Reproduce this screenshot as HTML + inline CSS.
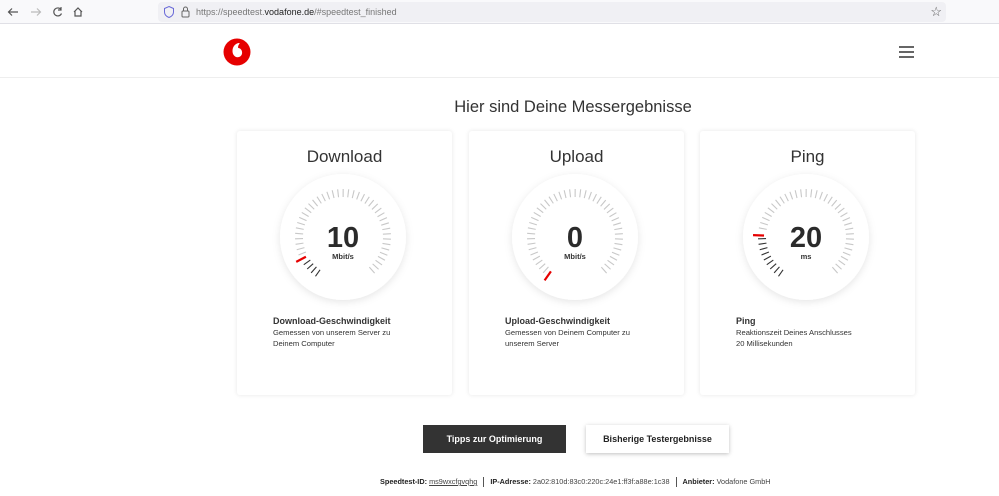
<!DOCTYPE html>
<html><head><meta charset="utf-8"><style>
*{box-sizing:border-box;margin:0;padding:0}
body{width:999px;height:496px;overflow:hidden;background:#fff;font-family:"Liberation Sans",sans-serif;color:#333;position:relative}
.bar{position:absolute;left:0;top:0;width:999px;height:24px;background:#f9f9fb;border-bottom:1px solid #e0e0e6}
.url{position:absolute;left:158px;top:2px;width:788px;height:20px;background:#f0f0f4;border-radius:4px;font-size:9px;color:#777;line-height:20px;padding-left:38px}
.url b{color:#222;font-weight:normal}
.hdr{position:absolute;top:24px;left:0;width:999px;height:54px;border-bottom:1px solid #eee}
h1{position:absolute;top:98px;left:0;width:1146px;text-align:center;font-weight:normal;font-size:16.5px;color:#333}
.card{position:absolute;top:131px;width:215px;height:264px;background:#fff;box-shadow:0 0 5px rgba(0,0,0,.1);border-radius:3px}
.card h2{position:absolute;top:16px;width:100%;text-align:center;font-weight:normal;font-size:17px;color:#333}
.card svg{position:absolute;left:0;top:0}
.d{position:absolute;left:36px;top:184px;font-size:7.6px;line-height:11px;color:#333}
.d b{font-size:9px;display:block;line-height:12px}
.btn{position:absolute;top:425px;height:28px;font-size:9px;font-weight:bold;text-align:center;line-height:28px}
.foot{position:absolute;top:477px;left:380px;font-size:7.3px;color:#444;white-space:nowrap}
.foot b{color:#222}
.sep{display:inline-block;width:1px;height:10px;background:#555;vertical-align:middle;margin:0 6px}
</style></head><body>
<div class="bar">
<svg width="150" height="24" style="position:absolute;left:0;top:0" fill="none" stroke="#555" stroke-width="1.2">
<path d="M18 12H9M12 8.5 8.5 12 12 15.5"/><path d="M31 12h9M37 8.5 40.5 12 37 15.5" stroke="#bbb"/>
<path d="M61 9.5A4 4 0 1 0 61.5 13.5M61 7v3h-3"/><path d="M74 12l4-4 4 4M75 11v5h6v-5"/></svg>
<div class="url">https://speedtest.<b>vodafone.de</b>/#speedtest_finished
<svg width="30" height="14" style="position:absolute;left:6px;top:3px" fill="none"><path d="M5 1.5l4.5 2v3.5c0 3-2.2 4.6-4.5 5.5C2.7 11.6.5 10 .5 7V3.5z" stroke="#6a6ad8"/><rect x="18" y="6" width="7" height="6" rx="1" stroke="#666"/><path d="M19.5 6V4a2 2 0 0 1 4 0v2" stroke="#666"/></svg>
<span style="position:absolute;right:4px;top:0;font-size:13px;color:#555">☆</span></div>
</div>
<div class="hdr">
<svg width="30" height="30" style="position:absolute;left:222px;top:13px" viewBox="0 0 30 30"><circle cx="15" cy="15" r="13.5" fill="#e60000"/><path d="M16.5 6c-3 .6-6 3.4-6 8 0 3.5 2.2 6.2 5 6.2 2.8 0 4.6-2 4.6-4.6 0-2.8-1.8-4.3-4-4.7-.2-2 .8-3.8 1.8-4.5z" fill="#fff"/></svg>
<svg width="16" height="14" style="position:absolute;left:899px;top:21px"><path d="M0 2h15M0 7h15M0 12h15" stroke="#333" stroke-width="1.5"/></svg>
</div>
<h1>Hier sind Deine Messergebnisse</h1>

<div class="card" style="left:237px"><h2>Download</h2><svg id="g1" width="215" height="180"></svg>
<div class="d"><b>Download-Geschwindigkeit</b>Gemessen von unserem Server zu<br>Deinem Computer</div></div>
<div class="card" style="left:469px"><h2>Upload</h2><svg id="g2" width="215" height="180"></svg>
<div class="d"><b>Upload-Geschwindigkeit</b>Gemessen von Deinem Computer zu<br>unserem Server</div></div>
<div class="card" style="left:700px"><h2>Ping</h2><svg id="g3" width="215" height="180"></svg>
<div class="d"><b>Ping</b>Reaktionszeit Deines Anschlusses<br>20 Millisekunden</div></div>

<div class="btn" style="left:423px;width:143px;background:#333;color:#fff">Tipps zur Optimierung</div>
<div class="btn" style="left:586px;width:143px;background:#fff;color:#222;box-shadow:0 1px 4px rgba(0,0,0,.25)">Bisherige Testergebnisse</div>
<div class="foot"><b>Speedtest-ID:</b> <u>ms9wxcfgvqhg</u><span class="sep"></span><b>IP-Adresse:</b> 2a02:810d:83c0:220c:24e1:ff3f:a88e:1c38<span class="sep"></span><b>Anbieter:</b> Vodafone GmbH</div>

<script>
function g(id,red,val,unit){
 var s=document.getElementById(id),cx=106,cy=106,h='';
 h+='<defs><filter id="f'+id+'" x="-30%" y="-30%" width="160%" height="160%"><feDropShadow dx="0" dy="2" stdDeviation="4" flood-color="#000" flood-opacity="0.1"/></filter></defs>';
 h+='<circle cx="'+cx+'" cy="'+cy+'" r="63" fill="#fff" filter="url(#f'+id+')"/>';
 var st=-145,step=6.6;
 for(var i=0;i<44;i++){
  var a=st+i*step;
  if(Math.abs(a-red)<3.3)continue;
  var r=a*Math.PI/180,sx=Math.sin(r),sy=-Math.cos(r);
  var col=a<red?'#333':'#c8c8c8';
  h+='<line x1="'+(cx+sx*40)+'" y1="'+(cy+sy*40)+'" x2="'+(cx+sx*48)+'" y2="'+(cy+sy*48)+'" stroke="'+col+'" stroke-width="1.1"/>';
 }
 var r=red*Math.PI/180,sx=Math.sin(r),sy=-Math.cos(r);
 h+='<line x1="'+(cx+sx*42)+'" y1="'+(cy+sy*42)+'" x2="'+(cx+sx*53)+'" y2="'+(cy+sy*53)+'" stroke="#e60000" stroke-width="2.2"/>';
 h+='<text x="'+cx+'" y="'+(cy+10)+'" text-anchor="middle" font-family="Liberation Sans" font-weight="bold" font-size="29" fill="#2b2b2b">'+val+'</text>';
 h+='<text x="'+cx+'" y="'+(cy+22)+'" text-anchor="middle" font-family="Liberation Sans" font-weight="bold" font-size="7.5" fill="#333">'+unit+'</text>';
 s.innerHTML=h;
}
g('g1',-118,'10','Mbit/s');g('g2',-145,'0','Mbit/s');g('g3',-88,'20','ms');
</script>
</body></html>
